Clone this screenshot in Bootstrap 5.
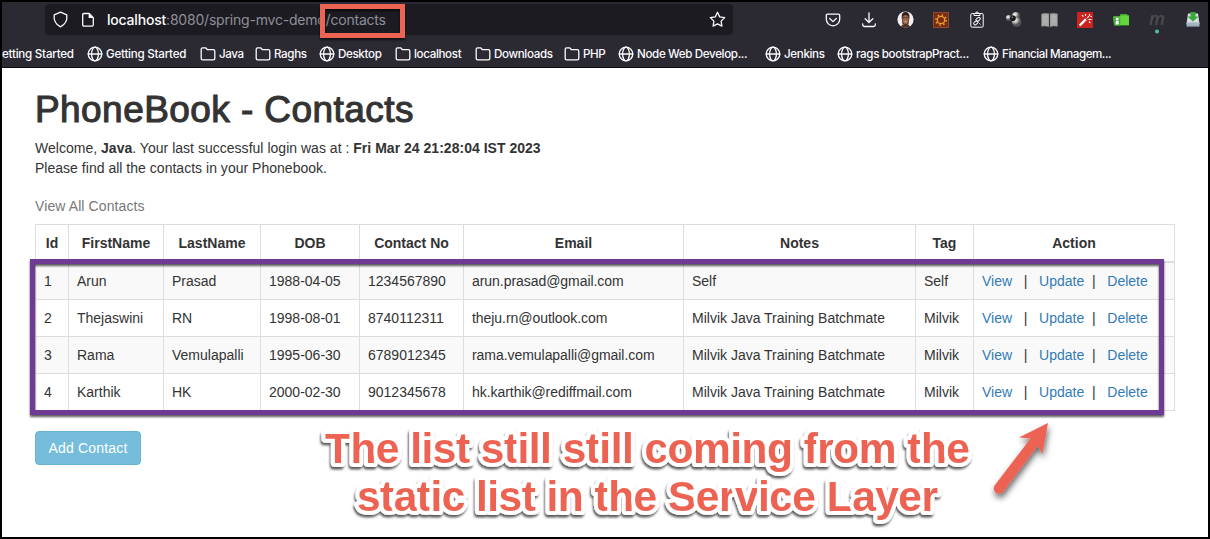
<!DOCTYPE html>
<html lang="en">
<head>
<meta charset="utf-8">
<meta name="viewport" content="width=device-width, initial-scale=1">
<title>PhoneBook - Contacts</title>
<link href="https://cdn.jsdelivr.net/npm/bootstrap@5.3.0/dist/css/bootstrap.min.css" rel="stylesheet">
<style>
body{font-family:"Liberation Sans",Arial,sans-serif;font-size:14px;line-height:20px;color:#333;width:1210px;height:539px;overflow:hidden}
.window-frame{width:1210px;height:539px;border:2px solid #000;background:#fff}
.browser-top{height:66px;background:#2b2a33;border-bottom:1px solid #0c0c0d;font-family:Inter,sans-serif;color:#fbfbfe}
.toolbar-row{height:35px;padding-left:43px;overflow:hidden}
.url-field{flex:none;width:688px;height:31px;margin-top:2px;background:#1c1b22;border-radius:4px;padding:0 7px 0 7px}
.url-text{font-size:14px;color:#8f8f98;margin-left:12px;letter-spacing:-.2px;line-height:31px}
.url-text b{font-weight:500;color:#fbfbfe}
.tool{flex:none;width:36px;height:35px}
.tools{margin-left:82px}
.bookmark-row{display:grid;grid-template-columns:85px 113px 55px 64px 76px 80px 89px 54px 147px 72px 146px 1fr;height:30px;margin-top:2px;align-items:center;font-size:11.6px;letter-spacing:-.35px;font-weight:500;white-space:nowrap}
.bookmark-row>span{display:flex;align-items:center;gap:3px}
.bookmark-row .roomy{letter-spacing:-.24px}
.bookmark-row .snug{letter-spacing:-.45px}
.bookmark-row svg{flex:none}
.ln{fill:none;stroke:#fbfbfe;stroke-width:1.3;stroke-linecap:round;stroke-linejoin:round}
.page-body{padding:22px 33px 0}
.page-title{font-size:37px;line-height:39px;font-weight:400;-webkit-text-stroke:1.1px #333;margin:0 0 9px;letter-spacing:.43px}
.intro{letter-spacing:.02px}
.caption-line{color:#777;margin-top:10px;height:36px;padding-top:8px;letter-spacing:.1px}
.contact-table{table-layout:fixed;width:1140px;margin:0 0 20px;border-collapse:collapse;color:#333;border-color:#ddd}
.contact-table th,.contact-table td{padding:8px;border:1px solid #ddd;white-space:nowrap}
.contact-table thead th{text-align:center;border-bottom-width:2px}
.contact-table tbody tr:nth-child(odd) td{background:#f9f9f9}
.contact-table td:nth-child(6){letter-spacing:-.05px}
.contact-table a{color:#337ab7;text-decoration:none}
.btn-add{background:#75bddb;border:1px solid #67b4d4;color:#fff;font-size:14px;line-height:20px;padding:6px 0;border-radius:4px;width:106px;height:34px;letter-spacing:.2px;white-space:nowrap}
.mark-url,.mark-rows{position:absolute;pointer-events:none}
.mark-url{left:320px;top:4px;width:85px;height:34px;border:5px solid #ec6453;filter:drop-shadow(0 2px 1px rgba(0,0,0,.6))}
.mark-rows{left:30px;top:259px;width:1134px;height:156px;border:5px solid #6f3a94;filter:drop-shadow(0 2px 1px rgba(0,0,0,.65))}
.notes-layer{position:absolute;left:300px;top:410px;pointer-events:none}
</style>
</head>
<body>
<svg width="0" height="0" class="position-absolute">
<defs>
<symbol id="globe" viewBox="0 0 16 16"><g class="ln"><circle cx="8" cy="8" r="6.8"/><ellipse cx="8" cy="8" rx="3.4" ry="6.8"/><path d="M1.2 8h13.6"/></g></symbol>
<symbol id="folder" viewBox="0 0 16 16"><path class="ln" d="M1.2 12.5V3.2q0-1.4 1.4-1.4h3l1.9 1.9h5.8q1.5 0 1.5 1.5v7.3q0 1.4-1.5 1.4H2.6q-1.4 0-1.4-1.4z"/></symbol>
</defs>
</svg>
<div class="window-frame position-relative">
<header class="browser-top">
<div class="toolbar-row d-flex">
<div class="url-field d-flex align-items-center">
<svg width="17" height="17" viewBox="0 0 17 17"><path class="ln" d="M8.500 1.200 14.800 3.800Q15.800 12 8.500 15.800 1.200 12 2.200 3.800z"/></svg>
<svg width="14" height="16" viewBox="0 0 14 16" style="margin-left:12px"><path class="ln" d="M3 1.500h5.200L12.300 5.600v7.200q0 1.300-1.300 1.300H3q-1.300 0-1.300-1.300v-10q0-1.300 1.300-1.300z"/><path d="M7.600 1.300v4.700h4.800z" fill="#fbfbfe"/></svg>
<span class="url-text"><b>localhost</b>:8080/spring-mvc-demo/contacts</span>
<svg class="ms-auto" width="17" height="17" viewBox="0 0 17 17"><path class="ln" d="m8.500 1.300 2.200 4.600 5 .7-3.600 3.500.8 5-4.400-2.300-4.400 2.300.8-5L1.300 6.600l5-.7z"/></svg>
</div>
<div class="tools d-flex">
<span class="tool d-flex align-items-center justify-content-center"><svg width="16" height="16" viewBox="0 0 16 16"><path class="ln" d="M2.500 2.200h11q1.200 0 1.200 1.200v3.900a6.700 6.500 0 0 1-13.400 0V3.400q0-1.200 1.200-1.200zM4.700 6.500 8 9.600l3.300-3.100"/></svg></span>
<span class="tool d-flex align-items-center justify-content-center"><svg width="16" height="16" viewBox="0 0 16 16"><path class="ln" d="M8 .8v9.500M4.200 6.800 8 10.500l3.800-3.700M1.700 11.800v1q0 1.700 1.700 1.700h9.200q1.700 0 1.700-1.700v-1"/></svg></span>
<span class="tool d-flex align-items-center justify-content-center"><svg width="17" height="17" viewBox="0 0 17 17"><circle cx="8.500" cy="8.500" r="8.100" fill="#f3f1ef"/><path d="M4.700 6.500Q4.200 1 8.500 1t4 5.500L11.500 13h-6z" fill="#32221e"/><path d="M5.400 6q1.200-2 3.200-2t3.100 2v4.300q-.9 3-3.100 3t-3.200-3z" fill="#9c6650"/><path d="M4 15.200q1.500-2.400 4.500-2.400t4.500 2.400Q8.500 18 4 15.200z" fill="#54301f"/><path d="M6 6.700h2m1.200 0h2" stroke="#432a26"/><path d="M7 10.300q1.500 1.400 3.200 0z" fill="#f0d2c5"/></svg></span>
<span class="tool d-flex align-items-center justify-content-center"><svg width="16" height="16" viewBox="0 0 16 16"><path fill="#7c2c14" stroke="#a3583b" stroke-width=".8" d="M.4.4h15.200v15.200H.4z"/><circle cx="8" cy="8" r="3.700" fill="none" stroke="#e9a22d" stroke-width="1.300"/><circle cx="8" cy="8" r="5.100" fill="none" stroke="#e9a22d" stroke-width="1.600" stroke-dasharray="1.500 2.505"/></svg></span>
<span class="tool d-flex align-items-center justify-content-center"><svg width="14" height="17" viewBox="0 0 14 17"><g fill="none" stroke="#fbfbfe" stroke-width="1"><rect x=".8" y="2.500" width="12.400" height="13.700" rx="1.300"/><path d="M4 2.500h1.500a1.500 1.500 0 0 1 3 0H10v2H4z"/><rect x="5.800" y="7" width="4.700" height="2.800" rx="1.300" transform="rotate(-40 8 8.400)"/><rect x="3.500" y="10.300" width="4.700" height="2.800" rx="1.300" transform="rotate(-40 6 11.700)"/><path d="m9.300 12.300 1.200 1.200"/></g></svg></span>
<span class="tool d-flex align-items-center justify-content-center"><svg width="17" height="17" viewBox="0 0 17 17"><defs><radialGradient id="ball" cx=".35" cy=".3"><stop stop-color="#fff"/><stop offset=".5" stop-color="#bbb"/><stop offset="1" stop-color="#555"/></radialGradient></defs><circle cx="11" cy="5" r="4" fill="url(#ball)"/><circle cx="11.600" cy="11" r="4.800" fill="url(#ball)"/><circle cx="3.800" cy="7" r="3" fill="url(#ball)"/><circle cx="8" cy="7.300" r="2.800" fill="#1b1b1f"/><circle cx="7.300" cy="6.300" r=".7" fill="#999"/></svg></span>
<span class="tool d-flex align-items-center justify-content-center"><svg width="17" height="16" viewBox="0 0 17 16"><path fill="#aaa" stroke="#777" stroke-width=".7" d="M.5 2q4-1.500 8 0 4-1.500 8 0v12.300q-4-1-8 .6-4-1.600-8-.6z"/><path d="M8.500 2v13" stroke="#38373f" stroke-width="1.200"/><path d="M2 4.500h4.500M2 7h4.500M2 9.500h4.500M10.500 4.500H15M10.500 7H15M10.500 9.500H15" stroke="#bbb" stroke-width=".6"/></svg></span>
<span class="tool d-flex align-items-center justify-content-center"><svg width="16" height="16" viewBox="0 0 16 16"><rect width="16" height="16" rx=".6" fill="#c92420"/><path d="m2.700 13.500 6.800-6.800" stroke="#fff" stroke-width="2.400"/><path d="m8 6 2.300 2.300" stroke="#c92420" stroke-width=".8"/><path d="m10.300 5.800 1.600-1.600M8.500 4V2M11.500 7.500h3M12.500 2v2M5 3.200l1.400 1.300M12 9.500l1.300 1.300M13.500 4.500h1.300" stroke="#fff" stroke-width="1.100"/></svg></span>
<span class="tool d-flex align-items-center justify-content-center"><svg width="16" height="16" viewBox="0 0 16 16"><path d="M.3 4.500h6L7.500 2H14l.8 1.500H16v10H1.500z" fill="#3fae29"/><path d="M.3 4.500h6.500L8 3.500h8V13H1z" fill="#63d43c"/><path d="M.3 5.500h7v8H1z" fill="#48aa38"/><circle cx="4.200" cy="7" r="1.500" fill="#fff"/><path d="M2.700 9h3v3.500h-3z" fill="#f2ffed"/></svg></span>
<span class="tool d-flex align-items-center justify-content-center"><svg width="20" height="30" viewBox="0 0 20 30"><text x="10" y="19.500" text-anchor="middle" font-family="Open Sans" font-style="italic" font-weight="600" font-size="18" fill="#4b4b50">m</text><circle cx="10" cy="26.500" r="2" fill="#54bda7"/></svg></span>
<span class="tool d-flex align-items-center justify-content-center"><svg width="16" height="17" viewBox="0 0 16 17"><path d="M3 2.500h10L14.500 13h-13z" fill="#d6dce2"/><path d="M1.500 11.500h13v4h-13z" fill="#a7b4c1"/><path d="M2 15.300h12" stroke="#6f8191"/><path d="M5.500 1h5v4.500h3L8 10.500 2.500 5.500h3z" fill="#35ac35"/></svg></span>
</div>
</div>
<nav class="bookmark-row">
<span class="roomy">etting Started</span>
<span class="roomy"><svg width="16" height="16"><use href="#globe"/></svg>Getting Started</span>
<span><svg width="16" height="16"><use href="#folder"/></svg>Java</span>
<span><svg width="16" height="16"><use href="#folder"/></svg>Raghs</span>
<span><svg width="16" height="16"><use href="#globe"/></svg>Desktop</span>
<span><svg width="16" height="16"><use href="#folder"/></svg>localhost</span>
<span><svg width="16" height="16"><use href="#folder"/></svg>Downloads</span>
<span><svg width="16" height="16"><use href="#folder"/></svg>PHP</span>
<span><svg width="16" height="16"><use href="#globe"/></svg>Node Web Develop...</span>
<span><svg width="16" height="16"><use href="#globe"/></svg>Jenkins</span>
<span><svg width="16" height="16"><use href="#globe"/></svg>rags bootstrapPract...</span>
<span class="snug"><svg width="16" height="16"><use href="#globe"/></svg>Financial Managem...</span>
</nav>
</header>
<main class="page-body">
<h1 class="page-title">PhoneBook - Contacts</h1>
<div class="intro">Welcome, <b>Java</b>. Your last successful login was at : <b>Fri Mar 24 21:28:04 IST 2023</b></div>
<div class="intro">Please find all the contacts in your Phonebook.</div>
<div class="caption-line">View All Contacts</div>
<table class="contact-table">
<colgroup><col style="width:33px"><col style="width:95px"><col style="width:97px"><col style="width:99px"><col style="width:104px"><col style="width:220px"><col style="width:232px"><col style="width:58px"><col></colgroup>
<thead><tr><th>Id</th><th>FirstName</th><th>LastName</th><th>DOB</th><th>Contact No</th><th>Email</th><th>Notes</th><th>Tag</th><th>Action</th></tr></thead>
<tbody>
<tr><td>1</td><td>Arun</td><td>Prasad</td><td>1988-04-05</td><td>1234567890</td><td>arun.prasad@gmail.com</td><td>Self</td><td>Self</td><td><a href="#">View</a> &nbsp; | &nbsp; <a href="#">Update</a> &nbsp;| &nbsp; <a href="#">Delete</a></td></tr>
<tr><td>2</td><td>Thejaswini</td><td>RN</td><td>1998-08-01</td><td>8740112311</td><td>theju.rn@outlook.com</td><td>Milvik Java Training Batchmate</td><td>Milvik</td><td><a href="#">View</a> &nbsp; | &nbsp; <a href="#">Update</a> &nbsp;| &nbsp; <a href="#">Delete</a></td></tr>
<tr><td>3</td><td>Rama</td><td>Vemulapalli</td><td>1995-06-30</td><td>6789012345</td><td>rama.vemulapalli@gmail.com</td><td>Milvik Java Training Batchmate</td><td>Milvik</td><td><a href="#">View</a> &nbsp; | &nbsp; <a href="#">Update</a> &nbsp;| &nbsp; <a href="#">Delete</a></td></tr>
<tr><td>4</td><td>Karthik</td><td>HK</td><td>2000-02-30</td><td>9012345678</td><td>hk.karthik@rediffmail.com</td><td>Milvik Java Training Batchmate</td><td>Milvik</td><td><a href="#">View</a> &nbsp; | &nbsp; <a href="#">Update</a> &nbsp;| &nbsp; <a href="#">Delete</a></td></tr>
</tbody>
</table>
<button class="btn btn-add">Add Contact</button>
</main>
</div>
<div class="mark-url"></div>
<div class="mark-rows"></div>
<svg class="notes-layer" width="780" height="127" viewBox="300 410 780 127">
<defs>
<filter id="lift" x="-5%" y="-10%" width="110%" height="130%"><feDropShadow dx="-1" dy="2.500" stdDeviation=".9" flood-color="#000" flood-opacity=".65"/></filter>
<filter id="soft" x="-30%" y="-30%" width="170%" height="170%"><feDropShadow dx="1" dy="4" stdDeviation="3" flood-color="#000" flood-opacity=".6"/></filter>
</defs>
<g filter="url(#lift)" font-family="Liberation Sans" font-weight="700" font-size="42.500" fill="#ec6453" stroke="#fff" stroke-width="8" stroke-linejoin="round" style="paint-order:stroke">
<text x="325" y="463" textLength="645">The list still still coming from the</text>
<text x="357" y="511" textLength="581">static list in the Service Layer</text>
</g>
<path filter="url(#soft)" fill="#ec6453" d="M1048 423 1019 437.500l11.500 1-35.500 46.500a5 5 0 0 0 8 7l35-46.500 4.300 9z"/>
</svg>
<script src="https://cdn.jsdelivr.net/npm/bootstrap@5.3.0/dist/js/bootstrap.bundle.min.js"></script>
</body>
</html>
